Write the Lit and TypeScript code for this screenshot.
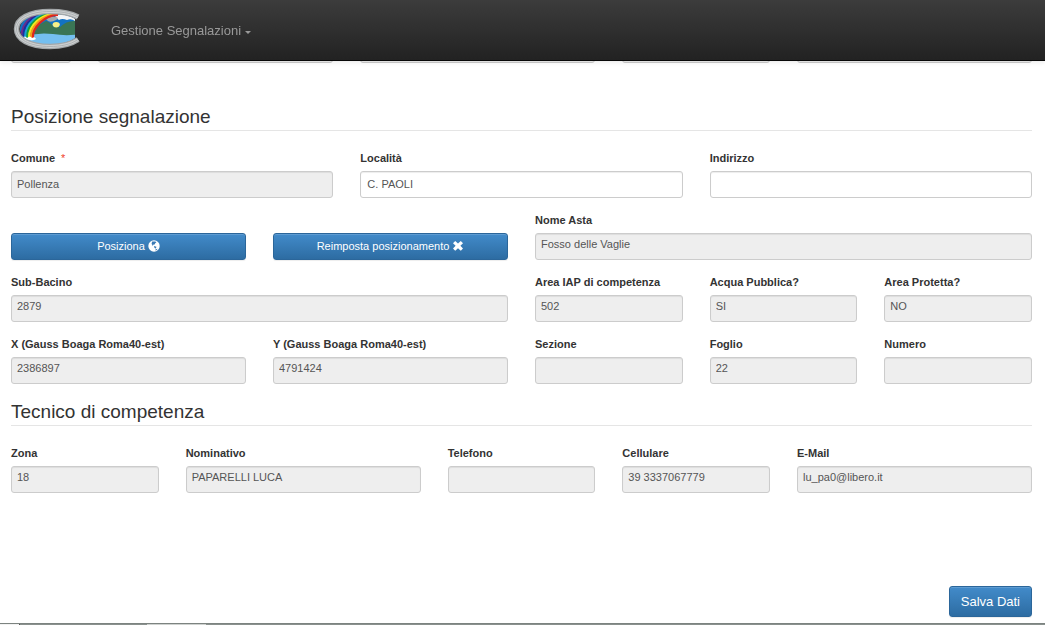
import { LitElement, html, css, svg, nothing } from "lit";
import { customElement } from "lit/decorators.js";
import { classMap } from "lit/directives/class-map.js";

interface Field {
  id: string;
  label: string;
  value: string;
  span: number;
  editable?: boolean;
  required?: boolean;
  centered?: boolean;
}

const previousRow = [1, 3, 3, 2, 3];

const place: Field[] = [
  { id: "comune", label: "Comune", value: "Pollenza", span: 4, required: true, centered: true },
  { id: "localita", label: "Località", value: "C. PAOLI", span: 4, editable: true },
  { id: "indirizzo", label: "Indirizzo", value: "", span: 4, editable: true },
];

const river: Field[] = [
  { id: "asta", label: "Nome Asta", value: "Fosso delle Vaglie", span: 6 },
  { id: "bacino", label: "Sub-Bacino", value: "2879", span: 6 },
  { id: "iap", label: "Area IAP di competenza", value: "502", span: 2 },
  { id: "acqua", label: "Acqua Pubblica?", value: "SI", span: 2 },
  { id: "protetta", label: "Area Protetta?", value: "NO", span: 2 },
  { id: "x", label: "X (Gauss Boaga Roma40-est)", value: "2386897", span: 3 },
  { id: "y", label: "Y (Gauss Boaga Roma40-est)", value: "4791424", span: 3 },
  { id: "sezione", label: "Sezione", value: "", span: 2 },
  { id: "foglio", label: "Foglio", value: "22", span: 2 },
  { id: "numero", label: "Numero", value: "", span: 2 },
];

const technician: Field[] = [
  { id: "zona", label: "Zona", value: "18", span: 2 },
  { id: "nominativo", label: "Nominativo", value: "PAPARELLI LUCA", span: 3 },
  { id: "telefono", label: "Telefono", value: "", span: 2 },
  { id: "cellulare", label: "Cellulare", value: "39 3337067779", span: 2 },
  { id: "email", label: "E-Mail", value: "lu_pa0@libero.it", span: 3 },
];

const rainbow = ["#6a2c8c", "#1c2f9c", "#1ba0d8", "#14a03c", "#f4ee1c", "#f59a18", "#e0261c"];

const ring = "M65 10 C57 5.500 47 4.500 37 4.500 C16 4.500 3.500 12 3.500 22 C3.500 32 16 39.500 37 39.500 C47 39.500 57 38 65 32.500";

const logo = html`<svg class="logo" viewBox="0 0 68 44" width="68" height="44" aria-hidden="true">
  <defs>
    <clipPath id="scene"><path d="M62 12 C56 8 46 6.500 36 6.500 C18 6.500 7 13 7 22 C7 31 18 37.500 36 37.500 C46 37.500 56 35.500 62 31Z" /></clipPath>
  </defs>
  <g clip-path="url(#scene)">
    <rect width="68" height="44" fill="#1272c4" />
    <path d="M20 30 L24 19 L33 14 Q37 15 41 20 L47 20 Q54 13 63 14 V30Z" fill="#3a7555" />
    <path d="M42 10 Q45 6 50 8 Q56 7 62 9 V14 Q58 11 54 13 Q49 11 46 13Z" fill="#f4f5f7" />
    <path d="M33 12 Q37 9 43 10 Q47 11 43 13 Q38 16 35 14Z" fill="#a5a9ad" />
    <path d="M39.500 18 a3.700 3 0 0 1 7.400 0 q-1 2.500-3.700 2.500 t-3.700-2.500z" fill="#f8f088" />
    <path d="M8 30 Q24 25 40 27 Q52 29 64 27.500 V42 H8Z" fill="#74bff0" />
    ${rainbow.map((c, i) => svg`<path
      d="M${8.5 + i * 1.9} 31 C${8 + i * 1.9} ${15 + i} ${20 + i * 1.8} ${4 + i * 0.7} ${45} ${3.4 + i * 0.75}"
      fill="none" stroke=${c} stroke-width="2.2" />`)}
    <path d="M10 31 q2-3 4 0 q3-3 5 0 q3-2 4 1 q-3 2-6 1 q-4 1-7-2z" fill="#fff" />
  </g>
  <g fill="none">
    <path d=${ring} stroke="#a3a7a9" stroke-width="5.500" />
    <path d=${ring} stroke="#cdd0d1" stroke-width="3" />
    <path d=${ring} stroke="#aeb2b4" stroke-width="1" />
  </g>
</svg>`;

const globeIcon = html`<svg class="icon" viewBox="0 0 12 12" width="12" height="12" aria-hidden="true">
  <circle cx="6" cy="6" r="5.700" fill="#fff" />
  <path d="M4.200 1.600 L7.400 1.400 L8.400 2.500 L7.300 3 L6.900 4.200 L5.600 4.700 L4.700 4.400 L5.200 5.600 L4.300 5.400 L3.600 3.400Z M6 6 L8.400 6.800 L8 8.200 L7.200 8.600 L6.300 7.400Z M7.400 9.500 L9.500 8.700 L8.800 10.100 L7.400 10.600Z" fill="#3a7ab5" />
</svg>`;

const crossIcon = html`<svg class="icon" viewBox="0 0 12 12" width="12" height="12" aria-hidden="true">
  <path d="M3.200 1 L6 3.600 L8.800 1 L11 3.200 L8.400 5.800 L11 8.600 L8.800 10.800 L6 8.200 L3.200 10.800 L1 8.600 L3.600 5.800 L1 3.200Z" fill="#fff" />
</svg>`;

@customElement("app-root")
export class AppRoot extends LitElement {
  static styles = css`
    :host {
      display: flex;
      flex-direction: column;
      min-height: 100vh;
      box-sizing: border-box;
      background: #fff;
      color: #333;
      font-family: "Liberation Sans", Arial, sans-serif;
      font-size: 11px;
      line-height: 15px;
    }
    *, *::before, *::after { box-sizing: border-box; }
    .navbar {
      position: fixed;
      top: 0;
      left: 0;
      right: 0;
      z-index: 10;
      display: flex;
      align-items: center;
      gap: 30px;
      height: 61px;
      padding: 0 13px;
      background: linear-gradient(#3c3c3c, #222);
      border-bottom: 1px solid #080808;
      box-shadow: 0 1px 5px rgba(0, 0, 0, 0.1);
    }
    .brand { display: flex; padding-bottom: 2px; }
    .logo { display: block; }
    .menu {
      display: flex;
      align-items: center;
      gap: 4px;
      padding-top: 2px;
      color: #999;
      font-size: 13px;
      line-height: 18px;
      text-decoration: none;
    }
    .caret {
      margin-top: 3px;
      border: 3px solid transparent;
      border-top-color: #999;
      border-bottom: 0;
    }
    .form { padding: 36px 13px 0 11px; }
    .grid {
      display: grid;
      grid-template-columns: repeat(12, minmax(0, 1fr));
      gap: 15px 27px;
      align-items: end;
    }
    .grid + .grid { margin-top: 15px; }
    .span1 { grid-column: span 1; }
    .span2 { grid-column: span 2; }
    .span3 { grid-column: span 3; }
    .span4 { grid-column: span 4; }
    .span6 { grid-column: span 6; }
    .title {
      margin: 15px 0 20px;
      border-bottom: 1px solid #e5e5e5;
      font-size: 19px;
      font-weight: 400;
      line-height: 26px;
    }
    .title.first { margin-top: 41px; }
    .label {
      display: block;
      margin-bottom: 5px;
      font-weight: 700;
    }
    .star {
      margin-left: 3px;
      color: #f0402c;
      font-weight: 400;
    }
    .input {
      display: block;
      width: 100%;
      height: 27px;
      margin: 0;
      padding: 0 6px 2px;
      border: 1px solid #ccc;
      border-radius: 3px;
      background: #fff;
      box-shadow: inset 0 1px 1px rgba(0, 0, 0, 0.075);
      color: #555;
      font: inherit;
      outline: none;
    }
    .locked {
      padding-left: 5px;
      background: #eee;
    }
    .raised { padding-bottom: 6px; }
    .button {
      display: flex;
      align-items: center;
      justify-content: center;
      gap: 3px;
      height: 27px;
      margin: 0;
      padding: 0 11px;
      border: 1px solid #2b669a;
      border-radius: 3px;
      background: linear-gradient(#428bca, #2d6ca2);
      box-shadow: inset 0 1px 0 rgba(255, 255, 255, 0.15), 0 1px 1px rgba(0, 0, 0, 0.075);
      color: #fff;
      font: inherit;
      cursor: pointer;
    }
    .icon { margin-bottom: 1px; }
    .save {
      height: 31px;
      margin: 93px 0 0 auto;
      font-size: 13px;
    }
    .status {
      display: flex;
      height: 2px;
      margin-top: auto;
      background: #8a918e;
      border-top: 1px solid #7c8380;
    }
    .start { width: 20px; background: #f2f2f2; border-right: 1px solid #555; }
    .task { width: 59px; margin-left: 127px; background: #cfd2d0; }
  `;

  private field(f: Field) {
    const classes = {
      input: true,
      locked: !f.editable,
      raised: !f.editable && !f.centered,
    };
    return html`<div class="span${f.span}">
      <label class="label" for=${f.id}>${f.label}${f.required ? html` <span class="star">*</span>` : nothing}</label>
      <input class=${classMap(classes)} id=${f.id} type="text" .value=${f.value} ?readonly=${!f.editable} />
    </div>`;
  }

  render() {
    return html`
      <nav class="navbar">
        <a class="brand" href="#" aria-label="Home">${logo}</a>
        <a class="menu" href="#">Gestione Segnalazioni<span class="caret"></span></a>
      </nav>
      <form class="form" @submit=${(e: Event) => e.preventDefault()}>
        <div class="grid">
          ${previousRow.map((n, i) => html`<div class="span${n}">
            <input class="input locked" type="text" aria-label="Dato ${i + 1}" readonly />
          </div>`)}
        </div>
        <h2 class="title first">Posizione segnalazione</h2>
        <div class="grid">${place.map((f) => this.field(f))}</div>
        <div class="grid">
          <button class="button span3" type="button">Posiziona ${globeIcon}</button>
          <button class="button span3" type="button">Reimposta posizionamento ${crossIcon}</button>
          ${river.map((f) => this.field(f))}
        </div>
        <h2 class="title">Tecnico di competenza</h2>
        <div class="grid">${technician.map((f) => this.field(f))}</div>
        <button class="button save" type="submit">Salva Dati</button>
      </form>
      <div class="status"><span class="start"></span><span class="task"></span></div>
    `;
  }
}
